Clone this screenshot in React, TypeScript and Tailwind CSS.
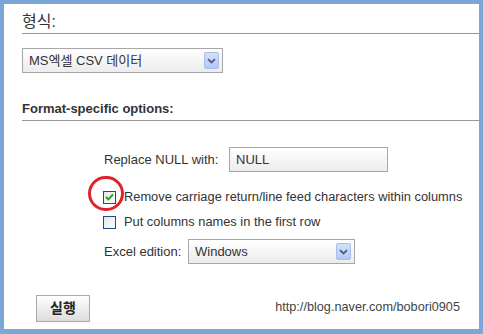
import React from 'react';

const font = { fontFamily: '"Liberation Sans", Arial, "Noto Sans CJK KR", sans-serif' };

const DropArrow = () => (
  <div className="w-[15px] h-[17px] flex items-center justify-center rounded-[2px] border border-[#a9bdea] bg-gradient-to-b from-[#d4e0fb] to-[#b3c8f4]">
    <svg width="9" height="6" viewBox="0 0 9 6">
      <path d="M1 1.2 L4.5 4.5 L8 1.2" fill="none" stroke="#4a5d82" strokeWidth="1.8" />
    </svg>
  </div>
);

const SelectBox = ({ value, className }: { value: string; className?: string }) => (
  <div
    className={
      'h-[25px] flex items-center justify-between pl-[6px] pr-[3px] border border-[#a7a7a7] bg-gradient-to-b from-white to-[#ececec] text-[13px] text-[#333] ' +
      (className ?? '')
    }
  >
    <span>{value}</span>
    <DropArrow />
  </div>
);

const CheckBox = ({ checked }: { checked?: boolean }) => (
  <div className="w-[13px] h-[13px] border border-[#1c4f7e] bg-gradient-to-br from-[#e6e6e6] to-white flex items-center justify-center">
    {checked && (
      <svg width="9" height="8" viewBox="0 0 9 8">
        <path d="M1 4 L3.4 6.4 L8 1.4" fill="none" stroke="#21a121" strokeWidth="2" />
      </svg>
    )}
  </div>
);

export default function App() {
  return (
    <div
      style={font}
      className="w-[483px] h-[334px] border-[4px] border-b-[5px] border-[#7aa7d5] bg-white text-[#333] flex flex-col"
    >
      <div className="ml-[18px] mt-[8px] border-b border-[#999] pb-[1px] text-[16px] leading-[20px]">형식:</div>

      <SelectBox value="MS엑셀 CSV 데이터" className="ml-[18px] mt-[14px] w-[201px]" />

      <div className="ml-[18px] mt-[28px] border-b border-[#999] pb-[3px] text-[13px] leading-[16px] font-bold">
        Format-specific options:
      </div>

      <div className="ml-[100px] mt-[26px] flex flex-col text-[13px]">
        <div className="flex items-center">
          <span className="w-[125px]">Replace NULL with:</span>
          <div className="w-[159px] h-[25px] flex items-center pl-[6px] border border-[#a7a7a7] bg-gradient-to-b from-white to-[#ececec]">
            NULL
          </div>
        </div>

        <div className="relative mt-[16px] h-[18px] flex items-center">
          <div className="absolute left-[-16px] top-[-12px] w-[36px] h-[35px] rounded-full border-[3px] border-[#e3212b]" />
          <div className="ml-[-1px]">
            <CheckBox checked />
          </div>
          <span className="ml-[8px] text-[12.85px]">Remove carriage return/line feed characters within columns</span>
        </div>

        <div className="mt-[7px] h-[18px] flex items-center">
          <div className="ml-[-1px]">
            <CheckBox />
          </div>
          <span className="ml-[8px] text-[12.85px]">Put columns names in the first row</span>
        </div>

        <div className="mt-[8px] flex items-center">
          <span className="w-[84px]">Excel edition:</span>
          <SelectBox value="Windows" className="w-[167px]" />
        </div>
      </div>

      <div className="mt-[31px] ml-[32px] mr-[19px] flex items-center justify-between">
        <button className="w-[54px] h-[27px] border border-[#a9a9a9] bg-gradient-to-b from-white to-[#dcdcdc] text-[14px] font-bold text-[#222]">
          실행
        </button>
        <span className="text-[12.7px] text-[#444] mt-[-2px]">http://blog.naver.com/bobori0905</span>
      </div>
    </div>
  );
}
